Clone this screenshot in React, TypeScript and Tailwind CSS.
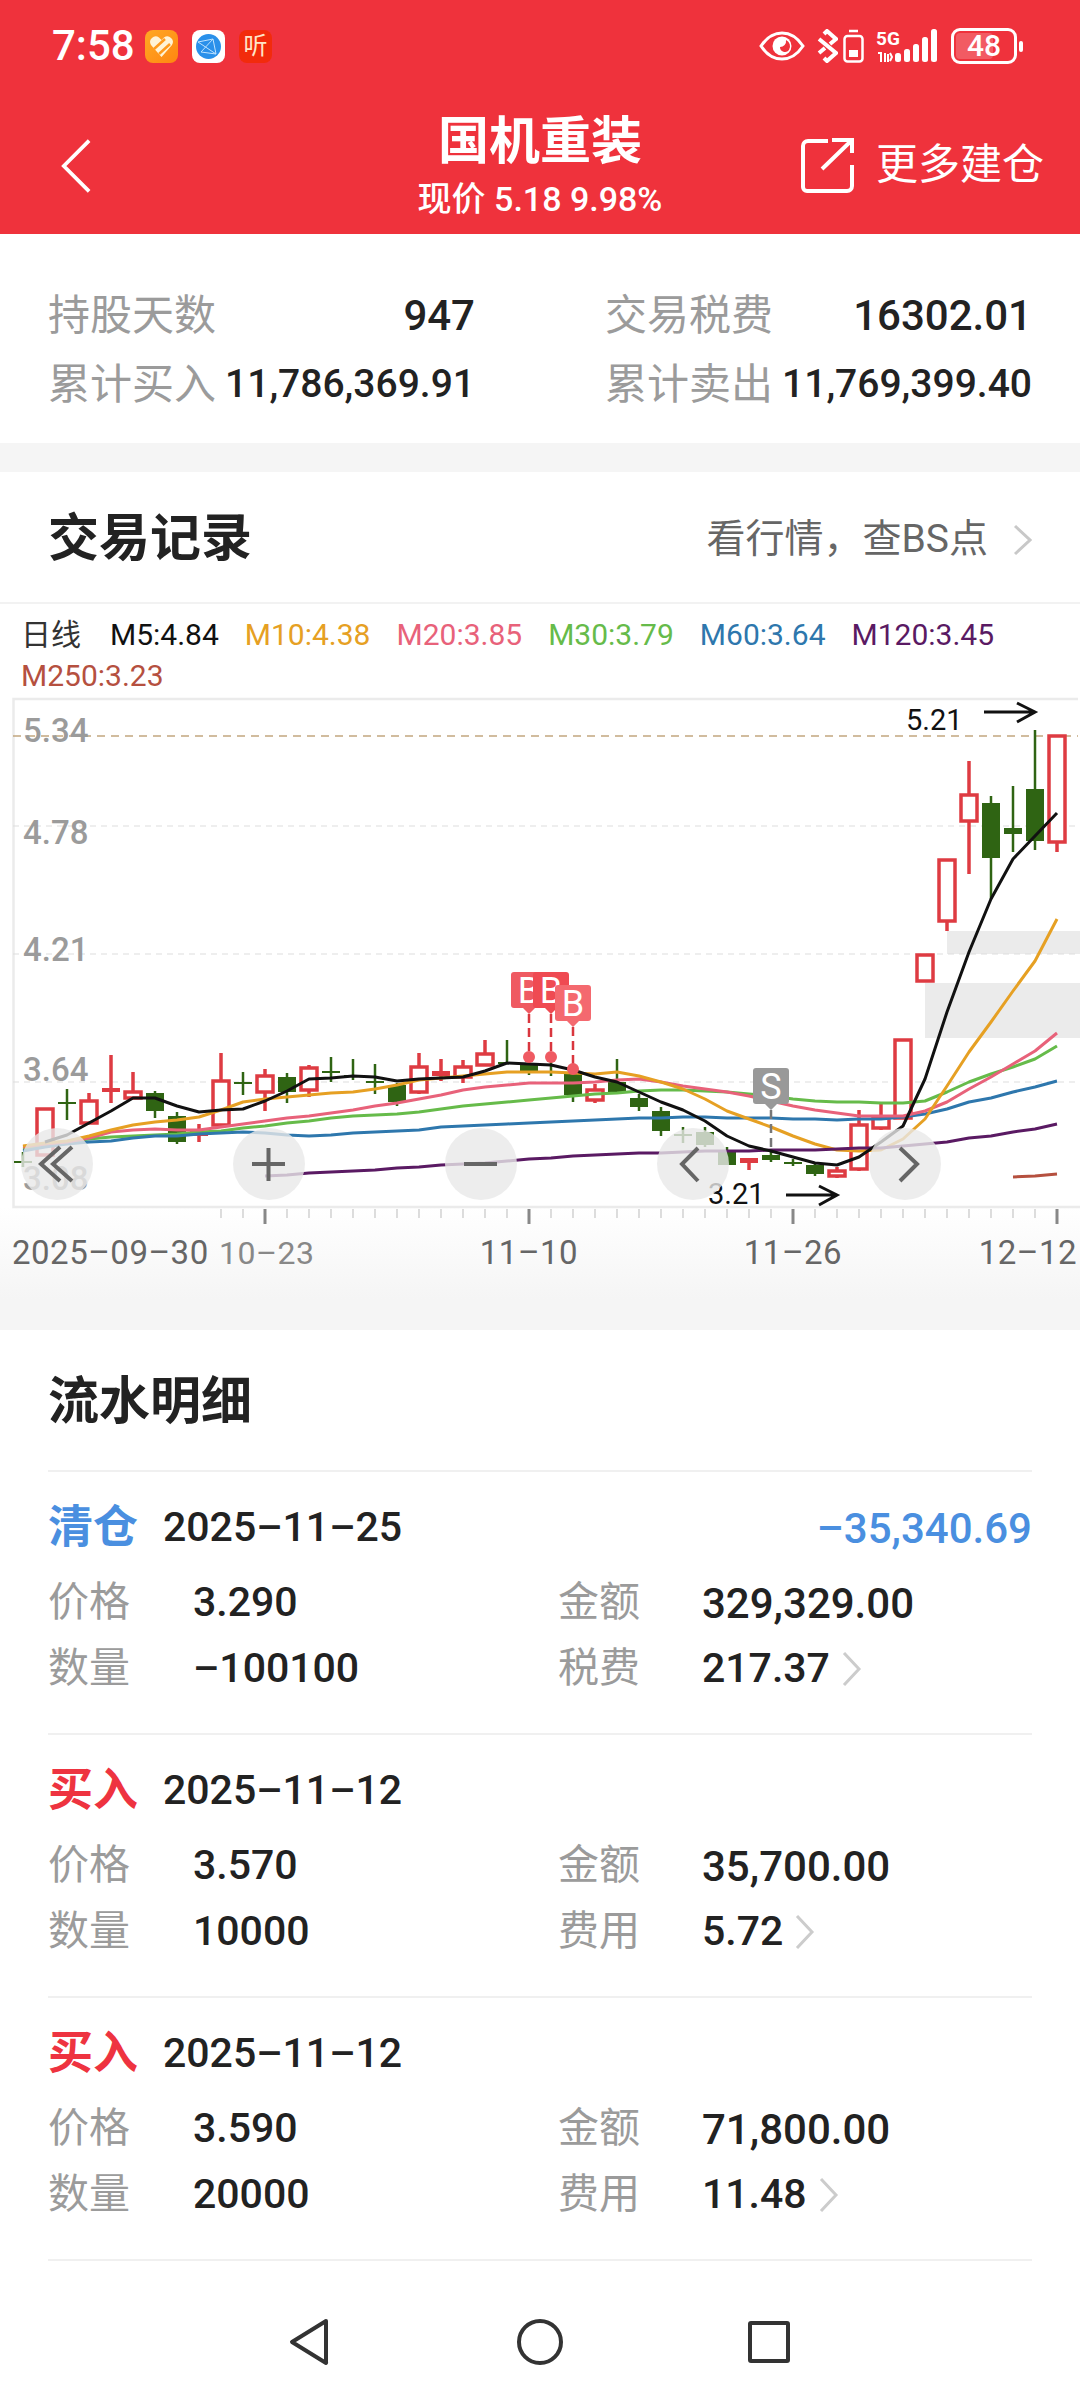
import React from "react";

// [red?, wickTop, bodyTop, bodyBottom, wickBottom]
const candles: [number, number, number, number, number][] = [
  [0, 1153, 1162, 1164, 1168], [1, 1109, 1109, 1157, 1157], [0, 1090, 1103, 1105, 1121], [1, 1094, 1101, 1125, 1125],
  [1, 1056, 1089, 1093, 1104], [1, 1073, 1092, 1100, 1100], [0, 1092, 1094, 1112, 1119], [0, 1113, 1117, 1143, 1145],
  [1, 1125, 1132, 1137, 1143], [1, 1054, 1081, 1127, 1127], [0, 1073, 1083, 1085, 1096], [1, 1070, 1076, 1094, 1112],
  [0, 1074, 1078, 1093, 1104], [1, 1066, 1068, 1092, 1098], [0, 1058, 1072, 1074, 1083], [0, 1060, 1076, 1078, 1081],
  [0, 1065, 1082, 1084, 1095], [0, 1084, 1086, 1103, 1107], [1, 1054, 1067, 1094, 1095], [1, 1060, 1072, 1077, 1082],
  [1, 1061, 1067, 1079, 1084], [1, 1041, 1054, 1067, 1067], [0, 1041, 1063, 1065, 1065], [0, 1058, 1066, 1073, 1076],
  [0, 1058, 1072, 1074, 1077], [0, 1073, 1073, 1096, 1103], [1, 1085, 1090, 1102, 1104], [0, 1060, 1083, 1093, 1094],
  [0, 1095, 1099, 1108, 1112], [0, 1108, 1112, 1132, 1137], [0, 1128, 1135, 1137, 1144], [0, 1128, 1133, 1146, 1148],
  [0, 1148, 1153, 1166, 1166], [1, 1159, 1159, 1164, 1171], [0, 1150, 1156, 1161, 1163], [0, 1160, 1163, 1165, 1167],
  [0, 1163, 1166, 1175, 1177], [1, 1168, 1171, 1178, 1179], [1, 1111, 1125, 1171, 1172], [1, 1103, 1117, 1130, 1131],
  [1, 1040, 1040, 1120, 1120], [1, 955, 955, 983, 983], [1, 860, 860, 923, 932], [1, 762, 795, 823, 875],
  [0, 797, 804, 859, 900], [0, 787, 829, 835, 853], [0, 731, 790, 842, 851], [1, 736, 736, 844, 853],
];

const xAt = (i: number) => 23 + 22 * i;

const maLines: { color: string; start: number; ys: number[] }[] = [
  { color: "#66bb4a", start: 0, ys: [1150, 1147, 1143, 1140, 1138, 1137, 1136, 1135, 1133, 1132, 1129, 1127, 1124, 1122, 1119, 1117, 1116, 1115, 1113, 1110, 1107, 1105, 1103, 1101, 1099, 1097, 1095, 1094, 1092, 1091, 1091, 1092, 1093, 1095, 1097, 1100, 1102, 1103, 1103, 1104, 1104, 1102, 1093, 1083, 1075, 1068, 1060, 1047] },
  { color: "#2e77ad", start: 0, ys: [1152, 1148, 1145, 1143, 1142, 1139, 1137, 1137, 1135, 1134, 1133, 1134, 1136, 1137, 1136, 1134, 1133, 1132, 1131, 1128, 1127, 1126, 1125, 1124, 1123, 1122, 1121, 1120, 1119, 1119, 1118, 1118, 1119, 1119, 1119, 1120, 1120, 1121, 1120, 1120, 1118, 1115, 1110, 1103, 1099, 1093, 1088, 1082] },
  { color: "#e8627a", start: 0, ys: [1148, 1145, 1143, 1139, 1133, 1131, 1130, 1131, 1131, 1128, 1125, 1122, 1119, 1117, 1114, 1111, 1107, 1104, 1100, 1096, 1091, 1088, 1086, 1084, 1084, 1084, 1083, 1081, 1080, 1083, 1087, 1090, 1093, 1097, 1102, 1107, 1111, 1114, 1117, 1117, 1117, 1112, 1103, 1090, 1078, 1065, 1052, 1034] },
  { color: "#e6a023", start: 0, ys: [1147, 1144, 1142, 1137, 1131, 1126, 1123, 1121, 1118, 1111, 1103, 1100, 1098, 1096, 1094, 1093, 1090, 1086, 1081, 1079, 1077, 1075, 1073, 1073, 1073, 1074, 1075, 1073, 1077, 1083, 1090, 1100, 1112, 1120, 1128, 1137, 1145, 1151, 1152, 1151, 1140, 1120, 1087, 1053, 1023, 992, 962, 920] },
  { color: "#5a1a63", start: 11, ys: [1177, 1176, 1174, 1173, 1172, 1171, 1169, 1168, 1166, 1165, 1164, 1162, 1160, 1159, 1157, 1156, 1155, 1154, 1154, 1153, 1152, 1152, 1152, 1151, 1151, 1151, 1150, 1149, 1149, 1147, 1145, 1143, 1139, 1137, 1133, 1130, 1125] },
  { color: "#b5503f", start: 45, ys: [1178, 1177, 1175] },
  { color: "#111111", start: 1, ys: [1143, 1136, 1124, 1112, 1099, 1099, 1107, 1113, 1111, 1110, 1102, 1092, 1080, 1079, 1077, 1078, 1082, 1080, 1079, 1078, 1072, 1064, 1065, 1066, 1071, 1078, 1083, 1093, 1103, 1111, 1122, 1137, 1147, 1152, 1158, 1164, 1166, 1158, 1143, 1127, 1080, 1013, 953, 900, 860, 837, 814] },
];

const legend = [
  { text: "M5:4.84", color: "text-[#111111]" },
  { text: "M10:4.38", color: "text-[#e6a023]" },
  { text: "M20:3.85", color: "text-[#e8627a]" },
  { text: "M30:3.79", color: "text-[#66bb4a]" },
  { text: "M60:3.64", color: "text-[#2e77ad]" },
  { text: "M120:3.45", color: "text-[#5a1a63]" },
  { text: "M250:3.23", color: "text-[#b5503f]" },
];

const records = [
  { type: "清仓", typeColor: "text-[#4a8fe0]", date: "2025–11–25", profit: "–35,340.69", price: "3.290", qty: "–100100", amount: "329,329.00", feeLabel: "税费", fee: "217.37" },
  { type: "买入", typeColor: "text-[#ee3340]", date: "2025–11–12", price: "3.570", qty: "10000", amount: "35,700.00", feeLabel: "费用", fee: "5.72" },
  { type: "买入", typeColor: "text-[#ee3340]", date: "2025–11–12", price: "3.590", qty: "20000", amount: "71,800.00", feeLabel: "费用", fee: "11.48" },
];

function StatusBar() {
  return (
    <div className="flex h-[92px] items-center justify-between pl-[52px] pr-[57px] text-white">
      <div className="flex items-center">
        <span className="w-[93px] text-[42px] leading-none font-medium">7:58</span>
        <div className="flex gap-[14px]">
          <div className="flex h-[33px] w-[33px] items-center justify-center rounded-[8px] bg-gradient-to-br from-[#ffa823] to-[#ff860f]">
            <svg viewBox="0 0 33 33" className="h-[33px] w-[33px]">
              <path d="M16.5 27 6 15a5.6 5.6 0 0 1 8-7.5l2.5 2.5 2.5-2.5a5.6 5.6 0 0 1 8 7.5z" fill="#fff3d6" />
              <path d="M9 19 20 9M14 24 25 14" stroke="#ff9a1c" strokeWidth="2.5" />
            </svg>
          </div>
          <div className="flex h-[33px] w-[33px] items-center justify-center rounded-[8px] bg-white">
            <svg viewBox="0 0 33 33" className="h-[33px] w-[33px]">
              <circle cx="16.5" cy="16.5" r="12.5" fill="#2a90ea" />
              <path d="M6 12 21 9 24 24 9 22 21 9M6 12 24 24" stroke="#bfe3ff" strokeWidth="1" fill="none" />
            </svg>
          </div>
          <div className="flex h-[33px] w-[33px] items-center justify-center rounded-[8px] bg-[#f22b0c] text-[24px] leading-none text-[#ffe6c9]">听</div>
        </div>
      </div>
      <div className="flex items-center">
        <svg viewBox="0 0 46 30" className="h-[30px] w-[46px]">
          <path d="M2 15C8 6 15 2 23 2s15 4 21 13c-6 9-13 13-21 13S8 24 2 15z" fill="none" stroke="#fff" strokeWidth="3" />
          <circle cx="23" cy="15" r="9.5" fill="#fff" />
          <path d="M27 9a6 6 0 0 1-6 7 5 5 0 0 0 9 3 7 7 0 0 0-3-10z" fill="#ef323c" />
        </svg>
        <svg viewBox="0 0 21 34" className="ml-[12px] h-[34px] w-[21px]">
          <path d="M2 10l17 14-9 8-3-3M2 24l6-5M13 15l6-5-9-8-3 3" fill="none" stroke="#fff" strokeWidth="4" />
        </svg>
        <svg viewBox="0 0 21 34" className="ml-[5px] h-[34px] w-[21px]">
          <path d="M6 2h9" stroke="#fff" strokeWidth="2.5" />
          <rect x="1.5" y="7" width="18" height="25.5" rx="3" fill="none" stroke="#fff" strokeWidth="2.5" />
          <rect x="6" y="21" width="9" height="7" fill="#fff" />
        </svg>
        <svg viewBox="0 0 62 34" className="ml-[12px] h-[34px] w-[62px]">
          <text x="0" y="16" fill="#fff" fontSize="19" fontWeight="700" fontFamily="Roboto">5G</text>
          <path d="M2 24h3v9M9 33V24M12 33V25M14 24l2 4-2 4" stroke="#fff" strokeWidth="2" fill="none" />
          <rect x="19" y="24" width="6" height="9" rx="2.5" fill="#fff" />
          <rect x="28" y="20" width="6" height="13" rx="2.5" fill="#fff" />
          <rect x="37" y="15" width="6" height="18" rx="2.5" fill="#fff" />
          <rect x="46" y="8" width="6" height="25" rx="2.5" fill="#fff" />
          <rect x="55" y="0" width="6" height="33" rx="2.5" fill="#fff" />
        </svg>
        <div className="ml-[13px] flex items-center">
          <div className="relative flex h-[36px] w-[66px] items-center justify-center overflow-hidden rounded-[9px] border-[3px] border-white">
            <div className="absolute inset-y-[2px] left-[2px] w-[37px] rounded-[4px] bg-white/20" />
            <span className="relative text-[30px] leading-none font-medium">48</span>
          </div>
          <div className="ml-[2px] h-[11px] w-[4px] rounded-full bg-white" />
        </div>
      </div>
    </div>
  );
}

function Header() {
  return (
    <div className="h-[234px] bg-[#ef323c] text-white">
      <StatusBar />
      <div className="grid grid-cols-[1fr_auto_1fr] items-start">
        <div className="pl-[61px] pt-[45px]">
          <svg viewBox="0 0 32 58" className="h-[58px] w-[30px]">
            <path d="M30 2 3 29l27 27" fill="none" stroke="#fff" strokeWidth="4" />
          </svg>
        </div>
        <div className="flex flex-col items-center pt-[22px]">
          <span className="text-[51px] leading-[56px] font-bold">国机重装</span>
          <span className="mt-[9px] text-[34px] leading-[40px] font-medium">现价 5.18 9.98%</span>
        </div>
        <div className="flex items-center justify-end gap-[22px] pr-[36px] pt-[45px]">
          <svg viewBox="0 0 54 56" className="h-[56px] w-[54px]">
            <path d="M28 4H8a5 5 0 0 0-5 5v41a4 4 0 0 0 4 4h40a5 5 0 0 0 5-5V28" fill="none" stroke="#fff" strokeWidth="4" />
            <path d="M22 32 51 4M32 3h20v13" fill="none" stroke="#fff" strokeWidth="4" />
          </svg>
          <span className="text-[42px] leading-none">更多建仓</span>
        </div>
      </div>
    </div>
  );
}

function SummaryItem({ label, value, size }: { label: string; value: string; size: string }) {
  return (
    <div className="flex h-[69px] items-center justify-between">
      <span className="text-[42px] text-[#9b9b9b]">{label}</span>
      <span className={`${size} font-medium text-[#222222]`}>{value}</span>
    </div>
  );
}

function Summary() {
  return (
    <div className="grid h-[209px] grid-cols-[427px_427px] content-start justify-between px-[48px] pt-[47px]">
      <SummaryItem label="持股天数" value="947" size="text-[42px]" />
      <SummaryItem label="交易税费" value="16302.01" size="text-[42px]" />
      <SummaryItem label="累计买入" value="11,786,369.91" size="text-[39px]" />
      <SummaryItem label="累计卖出" value="11,769,399.40" size="text-[39px]" />
    </div>
  );
}

function Marker({ x, top, tip, end, color, label }: { x: number; top: number; tip: number; end: number; color: string; label: string }) {
  const isBuy = label === "B";
  return (
    <g>
      <line x1={x} y1={tip} x2={x} y2={end} stroke={isBuy ? "#d9363e" : "#777777"} strokeWidth="2.5" strokeDasharray="9 5" />
      {isBuy && <circle cx={x} cy={end} r="6" fill="#ef5a62" />}
      <path d={`M${x - 18} ${top + 3}a3 3 0 0 1 3-3h30a3 3 0 0 1 3 3v30a3 3 0 0 1-3 3h-9l-6 6-6-6h-9a3 3 0 0 1-3-3z`} fill={color} />
      <text x={x} y={top + 31} textAnchor="middle" fill="#fff" fontSize="36">{label}</text>
    </g>
  );
}

function Chart() {
  const gridLines = [827, 955, 1083];
  const axisLabels: [string, number][] = [["5.34", 743], ["4.78", 845], ["4.21", 962], ["3.64", 1082], ["3.08", 1191]];
  const ticks = Array.from({ length: 39 }, (_, i) => i + 9);
  const major = [11, 23, 35, 47];
  return (
    <svg viewBox="0 696 1080 604" className="block h-[604px] w-[1080px]" fontFamily="Roboto, sans-serif">
      <defs>
        <linearGradient id="fade" x1="0" y1="0" x2="0" y2="1">
          <stop offset="0" stopColor="#ffffff" />
          <stop offset="1" stopColor="#f5f5f5" />
        </linearGradient>
      </defs>
      <rect x="0" y="1208" width="1080" height="92" fill="url(#fade)" />
      <path d="M1078 700H13.500V1208H1080" fill="none" stroke="#ebebeb" strokeWidth="2.500" />
      <rect x="947" y="932" width="133" height="23" fill="#ebebeb" />
      <rect x="925" y="984" width="155" height="55" fill="#ebebeb" />
      <line x1="13" y1="737" x2="1078" y2="737" stroke="#c2a67f" strokeWidth="1.500" strokeDasharray="8 6" />
      {gridLines.map((y) => (
        <line key={y} x1="13" y1={y} x2="1078" y2={y} stroke="#dddddd" strokeWidth="1" strokeDasharray="6 5" />
      ))}
      {axisLabels.map(([text, y]) => (
        <text key={text} x="23" y={y} fill="#9b9b9b" fontSize="33" fontWeight="500">{text}</text>
      ))}

      {candles.map(([red, wickTop, bodyTop, bodyBottom, wickBottom], i) => {
        const x = xAt(i);
        const color = red ? "#de3b42" : "#2f6413";
        const thin = bodyBottom - bodyTop < 7;
        return (
          <g key={i}>
            <line x1={x} y1={wickTop} x2={x} y2={wickBottom} stroke={color} strokeWidth={red ? 3.5 : 2.5} />
            {red && !thin ? (
              <rect x={x - 8} y={bodyTop + 1} width="16" height={bodyBottom - bodyTop - 2} fill="#ffffff" stroke={color} strokeWidth="3.500" />
            ) : (
              <rect x={x - 9} y={bodyTop} width="18" height={bodyBottom - bodyTop} fill={color} />
            )}
          </g>
        );
      })}

      {maLines.map((line) => (
        <polyline
          key={line.color}
          points={line.ys.map((y, i) => `${xAt(line.start + i)},${y}`).join(" ")}
          fill="none"
          stroke={line.color}
          strokeWidth="3"
          strokeLinejoin="round"
        />
      ))}

      <Marker x={529} top={973} tip={1015} end={1058} color="#ef5a62" label="B" />
      <Marker x={551} top={973} tip={1015} end={1058} color="#ef4a52" label="B" />
      <Marker x={573} top={986} tip={1028} end={1070} color="#f4696f" label="B" />
      <Marker x={771} top={1069} tip={1111} end={1152} color="#999999" label="S" />

      <text x="906" y="731" fill="#111111" fontSize="29">5.21</text>
      <path d="M984 713H1034M1017 704l18 9-18 10" fill="none" stroke="#111111" strokeWidth="3" />
      <text x="708" y="1205" fill="#111111" fontSize="29">3.21</text>
      <path d="M786 1196H836M819 1187l18 9-18 10" fill="none" stroke="#111111" strokeWidth="3" />

      {[57, 269, 481, 693, 905].map((x) => (
        <circle key={x} cx={x} cy="1165" r="36" fill="#e8e8e8" fillOpacity="0.8" />
      ))}
      <path d="M60 1148 41 1165l19 17M72 1148l-19 17 19 17" fill="none" stroke="#666666" strokeWidth="4" />
      <path d="M252 1165h33M268.500 1149v33" fill="none" stroke="#666666" strokeWidth="4" />
      <path d="M464 1165h33" fill="none" stroke="#666666" strokeWidth="4" />
      <path d="M698 1149 682 1165l16 17" fill="none" stroke="#666666" strokeWidth="4" />
      <path d="M900 1149 917 1165l-17 17" fill="none" stroke="#666666" strokeWidth="4" />

      {ticks.map((i) =>
        major.includes(i) ? (
          <line key={i} x1={xAt(i)} y1="1210" x2={xAt(i)} y2="1225" stroke="#888888" strokeWidth="3" />
        ) : (
          <line key={i} x1={xAt(i)} y1="1210" x2={xAt(i)} y2="1219" stroke="#bbbbbb" strokeWidth="1" />
        ),
      )}
      <text x="12" y="1265" fill="#666666" fontSize="33" letterSpacing="0.5">2025–09–30</text>
      <text x="219" y="1265" fill="#888888" fontSize="32" letterSpacing="0.5">10–23</text>
      <text x="529" y="1265" fill="#666666" fontSize="33" letterSpacing="0.5" textAnchor="middle">11–10</text>
      <text x="793" y="1265" fill="#666666" fontSize="33" letterSpacing="0.5" textAnchor="middle">11–26</text>
      <text x="1077" y="1265" fill="#666666" fontSize="33" letterSpacing="0.5" textAnchor="end">12–12</text>
    </svg>
  );
}

function Trades() {
  return (
    <div>
      <div className="flex h-[132px] items-center justify-between border-b-2 border-[#f2f2f2] pl-[48px] pr-[48px] pt-[5px]">
        <span className="text-[51px] font-bold text-[#222222]">交易记录</span>
        <div className="flex items-center gap-[25px]">
          <span className="text-[39px] text-[#666666]">看行情，查BS点</span>
          <svg viewBox="0 0 19 32" className="h-[32px] w-[19px]">
            <path d="M2 2l15 14L2 30" fill="none" stroke="#c8c8c8" strokeWidth="3" />
          </svg>
        </div>
      </div>
      <div className="flex h-[91px] flex-wrap content-start gap-x-[26px] pl-[21px] pt-[10px] text-[30px] leading-[41px]">
        <span className="mr-[3px] text-[#333333]">日线</span>
        {legend.map((item) => (
          <span key={item.text} className={item.color}>{item.text}</span>
        ))}
      </div>
      <Chart />
    </div>
  );
}

function Record({ record }: { record: (typeof records)[number] }) {
  return (
    <div className="h-[263px] border-b-2 border-[#f0f0f0] pt-[33px]">
      <div className="flex h-[46px] items-center justify-between">
        <div className="flex items-center">
          <span className={`w-[115px] text-[45px] font-bold ${record.typeColor}`}>{record.type}</span>
          <span className="text-[41px] font-medium text-[#222222]">{record.date}</span>
        </div>
        {record.profit && <span className="text-[42px] font-medium text-[#4a8fe0]">{record.profit}</span>}
      </div>
      <div className="mt-[19px] grid grid-cols-[145px_365px_144px_1fr] grid-rows-[66px_66px] items-center text-[41px] font-medium text-[#222222]">
        <span className="text-[41px] font-normal text-[#9b9b9b]">价格</span>
        <span>{record.price}</span>
        <span className="text-[41px] font-normal text-[#9b9b9b]">金额</span>
        <span className="text-[42px]">{record.amount}</span>
        <span className="text-[41px] font-normal text-[#9b9b9b]">数量</span>
        <span>{record.qty}</span>
        <span className="text-[41px] font-normal text-[#9b9b9b]">{record.feeLabel}</span>
        <div className="flex items-center gap-[12px]">
          <span>{record.fee}</span>
          <svg viewBox="0 0 20 34" className="h-[34px] w-[20px]">
            <path d="M2 1l15 16L2 33" fill="none" stroke="#cccccc" strokeWidth="3" />
          </svg>
        </div>
      </div>
    </div>
  );
}

function Flow() {
  return (
    <div className="px-[48px]">
      <div className="flex h-[142px] items-center border-b-2 border-[#f0f0f0] pt-[5px]">
        <span className="text-[51px] font-bold text-[#222222]">流水明细</span>
      </div>
      {records.map((record, i) => (
        <Record key={i} record={record} />
      ))}
    </div>
  );
}

function NavBar() {
  return (
    <div className="flex items-center justify-center pr-[2px] pt-[57px]">
      <svg viewBox="0 0 42 48" className="h-[48px] w-[42px]">
        <path d="M38 3 4 24l34 21a1 1 0 0 0 0-1z" fill="none" stroke="#333333" strokeWidth="4" strokeLinejoin="round" />
      </svg>
      <div className="ml-[187px] h-[46px] w-[46px] rounded-full border-[4px] border-[#333333]" />
      <div className="ml-[185px] h-[42px] w-[42px] rounded-[3px] border-[4px] border-[#333333]" />
    </div>
  );
}

export default function App() {
  return (
    <div className="h-[2400px] w-[1080px] overflow-hidden bg-white font-['Roboto','Noto_Sans_CJK_SC',sans-serif]">
      <Header />
      <Summary />
      <div className="h-[29px] bg-[#f5f5f5]" />
      <Trades />
      <div className="h-[31px] bg-[#f5f5f5]" />
      <Flow />
      <NavBar />
    </div>
  );
}
